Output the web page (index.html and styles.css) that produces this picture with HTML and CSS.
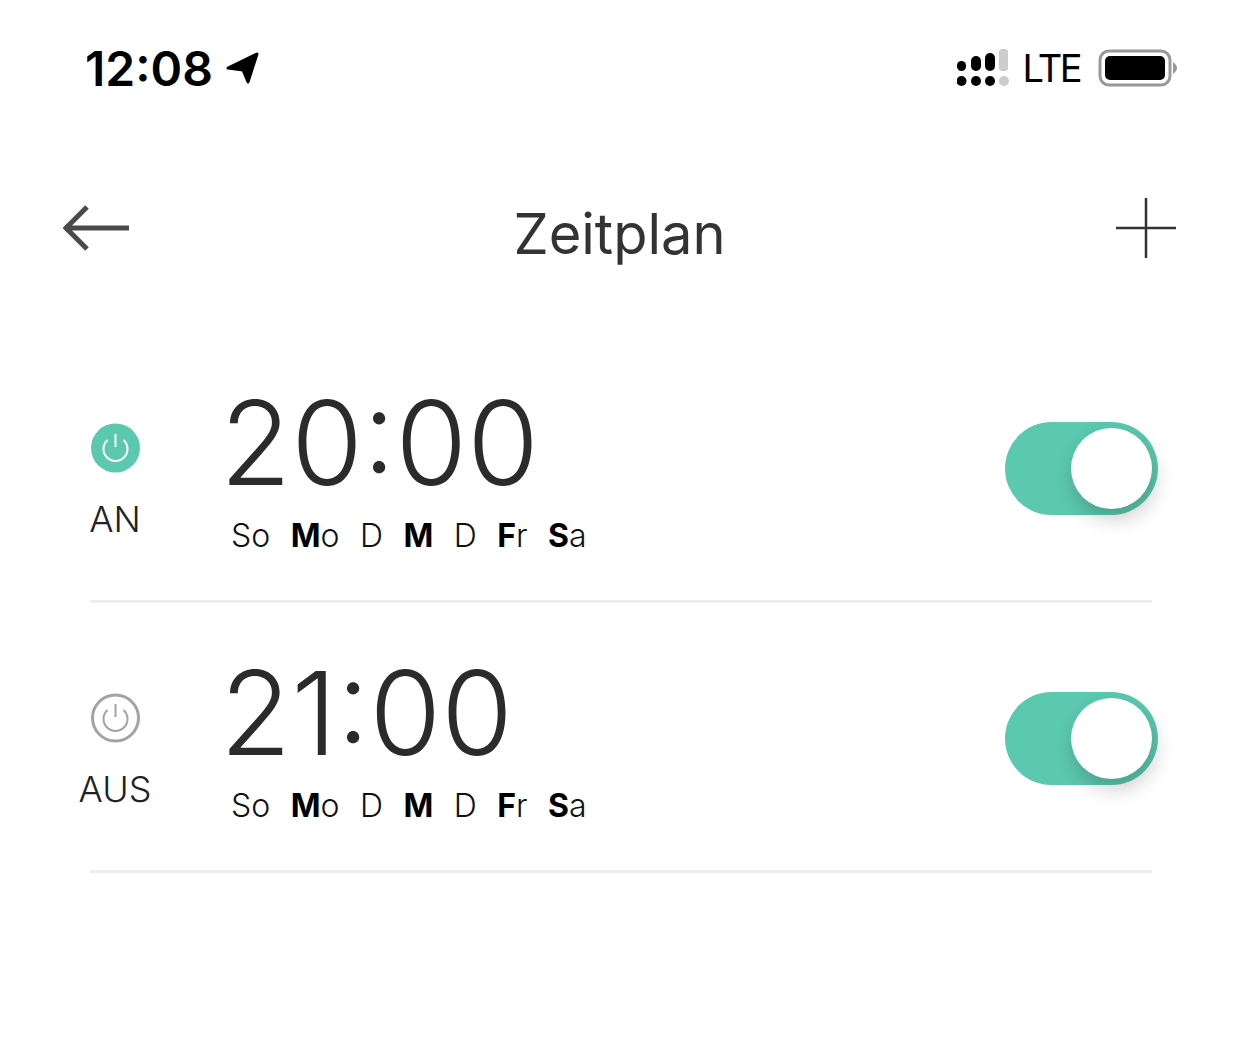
FILE: index.html
```html
<!DOCTYPE html>
<html lang="de">
<head>
    <meta charset="UTF-8">
    <meta name="viewport" content="width=device-width, initial-scale=1.0">
    <title>Zeitplan</title>
    <link rel="stylesheet" href="styles.css">
</head>
<body>
<div class="status-bar">
    <div class="status-left">
        <span class="clock">12:08</span>
        <svg class="location" width="34" height="34" viewBox="0 0 34 34">
            <path d="M2 17 L31 3 L22 31 L17 19 Z" fill="#000" stroke="#000" stroke-width="3" stroke-linejoin="round"/>
        </svg>
    </div>
    <div class="status-right">
        <svg class="signal" width="52" height="38" viewBox="0 0 52 38">
            <rect x="0" y="12" width="9" height="10" rx="4.5" fill="#000"/>
            <rect x="14" y="7" width="10" height="15" rx="5" fill="#000"/>
            <rect x="28" y="4" width="10" height="18" rx="5" fill="#000"/>
            <rect x="42" y="0" width="9" height="22" rx="3" fill="#ccc"/>
            <circle cx="4.5" cy="32" r="5" fill="#000"/>
            <circle cx="19" cy="32" r="5" fill="#000"/>
            <circle cx="33" cy="32" r="5" fill="#000"/>
            <circle cx="47" cy="32" r="5" fill="#ccc"/>
        </svg>
        <span class="lte">LTE</span>
        <svg class="battery" width="80" height="38" viewBox="0 0 80 38">
            <rect x="2" y="2" width="70" height="34" rx="9" fill="none" stroke="#999" stroke-width="3"/>
            <rect x="7" y="7" width="60" height="24" rx="5" fill="#000"/>
            <path d="M75 13 Q79 16 79 19 Q79 22 75 25 Z" fill="#999"/>
        </svg>
    </div>
</div>

<div class="nav-bar">
    <svg class="nav-icon" width="68" height="48" viewBox="0 0 68 48">
        <path d="M66 24 H4 M24 3 L3 24 L24 45" fill="none" stroke="#4a4a4a" stroke-width="5"/>
    </svg>
    <h1>Zeitplan</h1>
    <svg class="nav-icon nav-add" width="60" height="60" viewBox="0 0 60 60">
        <path d="M30 0 V60 M0 30 H60" fill="none" stroke="#333" stroke-width="2.5"/>
    </svg>
</div>

<div class="schedule-list">
    <div class="schedule-row">
        <div class="state">
            <svg class="power" width="50" height="50" viewBox="0 0 50 50">
                <circle cx="25.5" cy="25" r="24.5" fill="#5bc8b0"/>
                <path d="M17.5 17 A12 12 0 1 0 33.5 17 M25.5 11 V24" fill="none" stroke="#fff" stroke-width="2"/>
            </svg>
            <span class="state-label">AN</span>
        </div>
        <div class="time-block">
            <div class="time">20:00</div>
            <div class="days">
                <span>So</span>
                <span><b>M</b>o</span>
                <span>D</span>
                <span><b>M</b></span>
                <span>D</span>
                <span><b>F</b>r</span>
                <span><b>S</b>a</span>
            </div>
        </div>
        <div class="toggle"><div class="knob"></div></div>
    </div>
    <div class="schedule-row">
        <div class="state">
            <svg class="power" width="50" height="50" viewBox="0 0 50 50">
                <circle cx="25.5" cy="25" r="23" fill="none" stroke="#a3a3a3" stroke-width="3"/>
                <path d="M17.5 17 A12 12 0 1 0 33.5 17 M25.5 11 V24" fill="none" stroke="#a3a3a3" stroke-width="2"/>
            </svg>
            <span class="state-label">AUS</span>
        </div>
        <div class="time-block">
            <div class="time">21:00</div>
            <div class="days">
                <span>So</span>
                <span><b>M</b>o</span>
                <span>D</span>
                <span><b>M</b></span>
                <span>D</span>
                <span><b>F</b>r</span>
                <span><b>S</b>a</span>
            </div>
        </div>
        <div class="toggle"><div class="knob"></div></div>
    </div>
</div>
</body>
</html>
```

FILE: styles.css
```css
body {
    font-family: Inter, "Liberation Sans", sans-serif;
    margin: 0;
    background-color: #fff;
    color: #2b2b2b;
}

.status-bar {
    display: flex;
    justify-content: space-between;
    align-items: center;
    height: 136px;
    padding: 0 64px 0 85px;
}

.status-left, .status-right {
    display: flex;
    align-items: center;
}

.clock {
    font-size: 48px;
    font-weight: 600;
    color: #000;
}

.location {
    margin-left: 13px;
}

.lte {
    font-size: 38px;
    font-weight: 400;
    letter-spacing: -2.6px;
    color: #000;
    margin: 0 18px 0 14px;
}

.nav-bar {
    display: grid;
    grid-template-columns: 1fr auto 1fr;
    align-items: center;
    height: 184px;
    padding: 0 66px 0 63px;
}

.nav-add {
    justify-self: end;
}

h1 {
    margin: 12px 0 0;
    font-size: 56px;
    font-weight: 400;
    color: #333;
}

.schedule-list {
    margin: 13px 90px 0;
}

.schedule-row {
    display: flex;
    align-items: flex-start;
    height: 267px;
    border-bottom: 3px solid #eeeeee;
}

.state {
    width: 50px;
    display: flex;
    flex-direction: column;
    align-items: center;
    padding-top: 90px;
}

.power {
    flex-shrink: 0;
}

.state-label {
    font-size: 36px;
    font-weight: 300;
    margin-top: 24px;
    color: #222;
}

.time-block {
    margin-left: 80px;
    padding-top: 37px;
}

.time {
    font-size: 116px;
    font-weight: 300;
    line-height: 146px;
}

.days {
    display: flex;
    gap: 20.5px;
    margin-left: 11px;
    font-size: 32px;
    font-weight: 300;
    color: #111;
}

.days b {
    font-weight: 700;
    color: #000;
}

.toggle {
    position: relative;
    margin: 89px -6px 0 auto;
    width: 153px;
    height: 93px;
    border-radius: 47px;
    background-color: #5bc8b0;
}

.knob {
    position: absolute;
    top: 6px;
    right: 6px;
    width: 81px;
    height: 81px;
    border-radius: 50%;
    background-color: #fff;
    box-shadow: 3px 10px 20px rgba(0, 0, 0, 0.2);
}
```
